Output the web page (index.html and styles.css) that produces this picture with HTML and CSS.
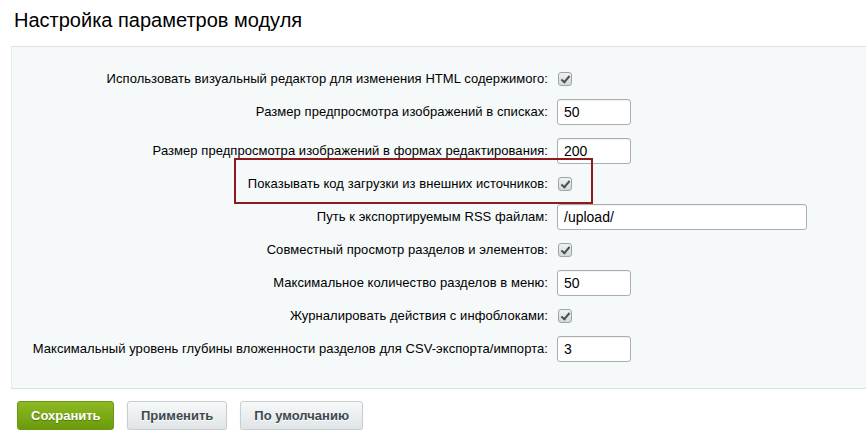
FILE: index.html
```html
<!DOCTYPE html>
<html lang="ru">
<head>
<meta charset="utf-8">
<title>Настройка параметров модуля</title>
<link rel="stylesheet" href="styles.css">
</head>
<body>
<h1 class="page-title">Настройка параметров модуля</h1>
<form class="settings">
  <div class="panel">
    <div class="row">
      <label class="lbl">Использовать визуальный редактор для изменения HTML содержимого:</label>
      <div class="ctl"><span class="check on"></span></div>
    </div>
    <div class="row">
      <label class="lbl">Размер предпросмотра изображений в списках:</label>
      <div class="ctl"><input class="field short" type="text" value="50"></div>
    </div>
    <div class="row spaced">
      <label class="lbl">Размер предпросмотра изображений в формах редактирования:</label>
      <div class="ctl"><input class="field short" type="text" value="200"></div>
    </div>
    <div class="row">
      <label class="lbl">Показывать код загрузки из внешних источников:</label>
      <div class="ctl"><span class="check on"></span></div>
    </div>
    <div class="row">
      <label class="lbl">Путь к экспортируемым RSS файлам:</label>
      <div class="ctl"><input class="field long" type="text" value="/upload/"></div>
    </div>
    <div class="row">
      <label class="lbl">Совместный просмотр разделов и элементов:</label>
      <div class="ctl"><span class="check on"></span></div>
    </div>
    <div class="row">
      <label class="lbl">Максимальное количество разделов в меню:</label>
      <div class="ctl"><input class="field short" type="text" value="50"></div>
    </div>
    <div class="row">
      <label class="lbl">Журналировать действия с инфоблоками:</label>
      <div class="ctl"><span class="check on"></span></div>
    </div>
    <div class="row">
      <label class="lbl">Максимальный уровень глубины вложенности разделов для CSV-экспорта/импорта:</label>
      <div class="ctl"><input class="field short" type="text" value="3"></div>
    </div>
    <div class="highlight"></div>
  </div>
  <div class="buttons">
    <button type="button" class="btn btn-save">Сохранить</button>
    <button type="button" class="btn">Применить</button>
    <button type="button" class="btn">По умолчанию</button>
  </div>
</form>
</body>
</html>
```
FILE: styles.css
```css
html, body {
  margin: 0;
  padding: 0;
  background: #fff;
  font-family: "Liberation Sans", Arial, sans-serif;
  color: #000;
}

.page-title {
  margin: 0;
  padding: 9px 0 0 14px;
  height: 36px;
  box-sizing: border-box;
  font-size: 20px;
  font-weight: normal;
  line-height: 23px;
  color: #000;
}

.settings {
  margin: 0;
}

.panel {
  position: relative;
  margin: 10px 0 0 11px;
  background: #f5f9f9;
  border-top: 1px solid #dce2e5;
  border-bottom: 1px solid #dce2e5;
  border-left: 1px solid #e6ebed;
  padding: 15px 0 23px;
}

.row {
  display: flex;
  align-items: center;
  height: 33px;
  gap: 9px;
}

.row.spaced {
  margin-top: 6px;
}

.lbl {
  flex: 0 0 536px;
  text-align: right;
  font-size: 13px;
  letter-spacing: 0.06px;
  color: #000;
  white-space: nowrap;
}

.ctl {
  display: flex;
  align-items: center;
}

.check {
  display: inline-block;
  box-sizing: border-box;
  width: 14px;
  height: 14px;
  margin-left: 1px;
  border: 1px solid #9ea3a6;
  border-radius: 3px;
  background: linear-gradient(#f0f2f3, #d3d8db);
  position: relative;
}

.check.on::after {
  content: "";
  position: absolute;
  left: 4px;
  top: 1px;
  width: 3px;
  height: 7px;
  border: solid #4a4f52;
  border-width: 0 2px 2px 0;
  transform: rotate(40deg);
}

.field {
  box-sizing: border-box;
  height: 26px;
  border: 1px solid #a8aeb1;
  border-radius: 3px;
  background: #fff;
  padding: 0 6px;
  font-family: "Liberation Sans", Arial, sans-serif;
  font-size: 14px;
  color: #000;
  box-shadow: inset 0 1px 1px rgba(0, 0, 0, 0.06);
}

.field.short {
  width: 74px;
}

.field.long {
  width: 250px;
}

.highlight {
  position: absolute;
  left: 222px;
  top: 111px;
  width: 359px;
  height: 46px;
  box-sizing: border-box;
  border: 2px solid #8e1b1b;
}

.buttons {
  display: flex;
  gap: 13px;
  padding: 12px 0 0 17px;
}

.btn {
  box-sizing: border-box;
  height: 29px;
  padding: 0 13px;
  border: 1px solid #c7cdd0;
  border-radius: 3px;
  background: linear-gradient(#f7f9f9, #dfe4e6);
  font-family: "Liberation Sans", Arial, sans-serif;
  font-size: 13px;
  font-weight: bold;
  color: #3d4950;
  text-shadow: 0 1px 0 #fff;
  box-shadow: 0 1px 1px rgba(0, 0, 0, 0.12);
  cursor: pointer;
}

.btn-save {
  width: 97px;
  border-color: #6b9713;
  background: linear-gradient(#8dba22, #6b9b0b);
  color: #fff;
  text-shadow: 0 1px 1px rgba(0, 0, 0, 0.3);
}
```
